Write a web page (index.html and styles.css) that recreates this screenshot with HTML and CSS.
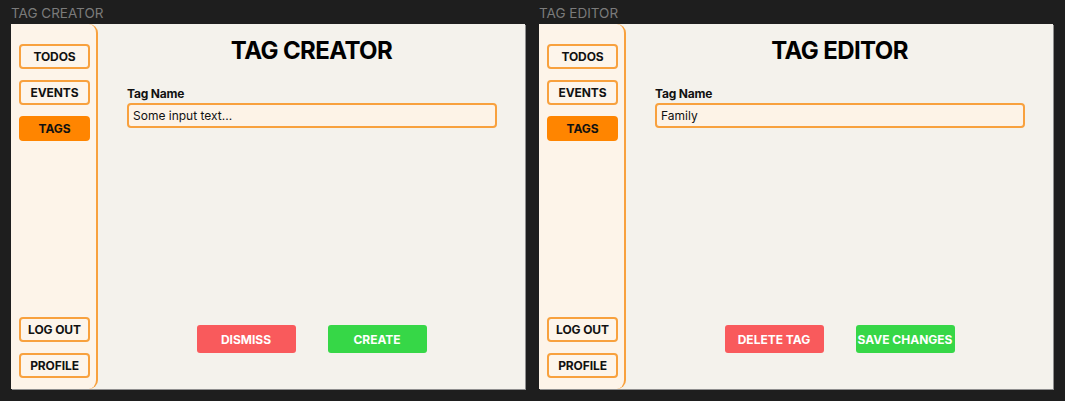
FILE: index.html
```html
<!DOCTYPE html>
<html>
<head>
<meta charset="utf-8">
<link rel="stylesheet" href="styles.css">
</head>
<body>
<div class="canvas">
  <section class="board">
    <div class="board-label">TAG CREATOR</div>
    <div class="frame">
      <nav class="sidebar">
        <div class="nav-top">
          <button class="nav-btn">TODOS</button>
          <button class="nav-btn">EVENTS</button>
          <button class="nav-btn active">TAGS</button>
        </div>
        <div class="nav-bottom">
          <button class="nav-btn">LOG OUT</button>
          <button class="nav-btn">PROFILE</button>
        </div>
      </nav>
      <main class="content">
        <h1 class="title">TAG CREATOR</h1>
        <div class="field">
          <label class="field-label">Tag Name</label>
          <div class="input">Some input text...</div>
        </div>
        <div class="actions">
          <button class="action red">DISMISS</button>
          <button class="action green">CREATE</button>
        </div>
      </main>
    </div>
  </section>
  <section class="board">
    <div class="board-label">TAG EDITOR</div>
    <div class="frame">
      <nav class="sidebar">
        <div class="nav-top">
          <button class="nav-btn">TODOS</button>
          <button class="nav-btn">EVENTS</button>
          <button class="nav-btn active">TAGS</button>
        </div>
        <div class="nav-bottom">
          <button class="nav-btn">LOG OUT</button>
          <button class="nav-btn">PROFILE</button>
        </div>
      </nav>
      <main class="content">
        <h1 class="title">TAG EDITOR</h1>
        <div class="field">
          <label class="field-label">Tag Name</label>
          <div class="input">Family</div>
        </div>
        <div class="actions">
          <button class="action red">DELETE TAG</button>
          <button class="action green">SAVE CHANGES</button>
        </div>
      </main>
    </div>
  </section>
</div>
</body>
</html>
```
FILE: styles.css
```css
* { box-sizing: border-box; }
html, body { margin: 0; padding: 0; }
body {
  background: #1e1e1e;
  font-family: Inter, "Noto Sans", sans-serif;
  width: 1065px;
  height: 401px;
  overflow: hidden;
}
.canvas {
  display: flex;
  gap: 14px;
  padding-left: 11px;
}
.board { display: flex; flex-direction: column; }
.board-label {
  height: 24px;
  padding-top: 5px;
  font-size: 13.5px;
  line-height: 16px;
  color: #7b7b7b;
}
.frame {
  width: 514px;
  height: 365px;
  background: #f4f2ec;
  display: flex;
  box-shadow: 1px 1px 0 #8f8f8f;
}
.sidebar {
  width: 87px;
  background: #fdf4e9;
  border-right: 2px solid #f8a13e;
  border-radius: 0 9px 9px 0;
  padding: 20px 0 11px 8px;
  display: flex;
  flex-direction: column;
  justify-content: space-between;
}
.nav-top, .nav-bottom {
  display: flex;
  flex-direction: column;
  gap: 11px;
}
.nav-btn {
  width: 71px;
  height: 25px;
  border: 2px solid #f8a13e;
  border-radius: 4px;
  background: #fdf5eb;
  font-family: inherit;
  font-weight: 700;
  font-size: 12px;
  letter-spacing: -0.1px;
  color: #111;
  padding: 0;
}
.nav-btn.active {
  background: #ff8500;
  border-color: #ff8500;
}
.content {
  flex: 1;
  display: flex;
  flex-direction: column;
  padding: 12px 28px 36px 28px;
}
.title {
  margin: 0;
  text-align: center;
  font-size: 24px;
  font-weight: 700;
  letter-spacing: -0.6px;
  line-height: 30px;
  color: #000;
}
.field { margin-top: 20px; display: flex; flex-direction: column; padding-left: 1px; }
.field-label {
  font-size: 12px;
  font-weight: 700;
  line-height: 15px;
  letter-spacing: -0.2px;
  color: #111;
  margin-bottom: 2px;
}
.input {
  height: 25px;
  border: 2px solid #f8a13e;
  border-radius: 4px;
  background: #fdf3e7;
  font-size: 12px;
  line-height: 21px;
  padding-left: 4px;
  color: #111;
}
.actions {
  margin-top: auto;
  display: flex;
  justify-content: center;
  gap: 32px;
}
.action {
  width: 99px;
  height: 28px;
  border: none;
  border-radius: 3px;
  font-family: inherit;
  font-weight: 700;
  font-size: 12px;
  color: #fff;
  padding: 0;
}
.action.red { background: #f95a5c; }
.action.green { background: #36d747; }
```
